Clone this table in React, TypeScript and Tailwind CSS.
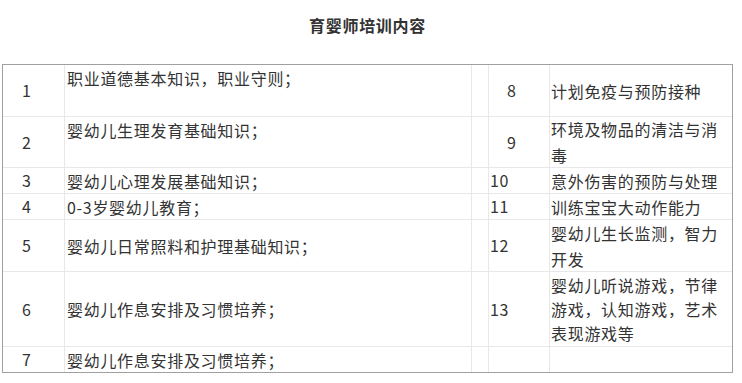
import React from "react";

type Row = {
  h: string;
  no: string;
  text: string[];
  textTop?: boolean;
  no2: string;
  no2Pad?: boolean;
  text2: string[];
};

const rows: Row[] = [
  { h: "h-[51px]", no: "1", text: ["职业道德基本知识，职业守则；"], textTop: true, no2: "8", no2Pad: true, text2: ["计划免疫与预防接种"] },
  { h: "h-[50px]", no: "2", text: ["婴幼儿生理发育基础知识；"], textTop: true, no2: "9", no2Pad: true, text2: ["环境及物品的清洁与消", "毒"] },
  { h: "h-[25px]", no: "3", text: ["婴幼儿心理发展基础知识；"], no2: "10", text2: ["意外伤害的预防与处理"] },
  { h: "h-[25px]", no: "4", text: ["0-3岁婴幼儿教育；"], no2: "11", text2: ["训练宝宝大动作能力"] },
  { h: "h-[51px]", no: "5", text: ["婴幼儿日常照料和护理基础知识；"], no2: "12", text2: ["婴幼儿生长监测，智力", "开发"] },
  { h: "h-[74px]", no: "6", text: ["婴幼儿作息安排及习惯培养；"], no2: "13", text2: ["婴幼儿听说游戏，节律", "游戏，认知游戏，艺术", "表现游戏等"] },
  { h: "h-[25px]", no: "7", text: ["婴幼儿作息安排及习惯培养；"], no2: "", text2: [] },
];

const cell = "bg-white flex";

export default function App() {
  return (
    <div
      className="w-[742px] h-[383px] bg-white text-[#333] overflow-hidden"
      style={{ fontFamily: '"Noto Sans CJK SC", "Noto Sans", sans-serif' }}
    >
      <div className="ml-[2px] w-[731px] h-[64px] pt-[13px] text-center text-[16px] font-bold leading-[24px] tracking-[0.7px] text-[#333]">
        育婴师培训内容
      </div>
      <div className="ml-[2px] w-[731px] border border-[#a0a0a0]">
        <div className="grid grid-cols-[61px_406px_16px_60px_182px] gap-px bg-[#e8e8e8] text-[16px] tracking-[0.7px]">
          {rows.map((r, i) => (
            <React.Fragment key={i}>
              <div className={`${cell} ${r.h} items-center pl-[19px] leading-[25px]`}>{r.no}</div>
              <div className={`${cell} ${r.h} ${r.textTop ? "items-start" : "items-center"} pl-[2px] leading-[26px]`}>
                <div>{r.text.map((t, j) => <div key={j}>{t}</div>)}</div>
              </div>
              <div className={`${cell} ${r.h}`}></div>
              <div className={`${cell} ${r.h} items-center ${r.no2Pad ? "pl-[18px]" : "pl-px"} leading-[25px]`}>{r.no2}</div>
              <div className={`${cell} ${r.h} items-center pl-px ${r.text2.length === 3 ? "leading-[24px]" : "leading-[26px]"}`}>
                <div>{r.text2.map((t, j) => <div key={j} className="whitespace-nowrap">{t}</div>)}</div>
              </div>
            </React.Fragment>
          ))}
        </div>
      </div>
    </div>
  );
}
